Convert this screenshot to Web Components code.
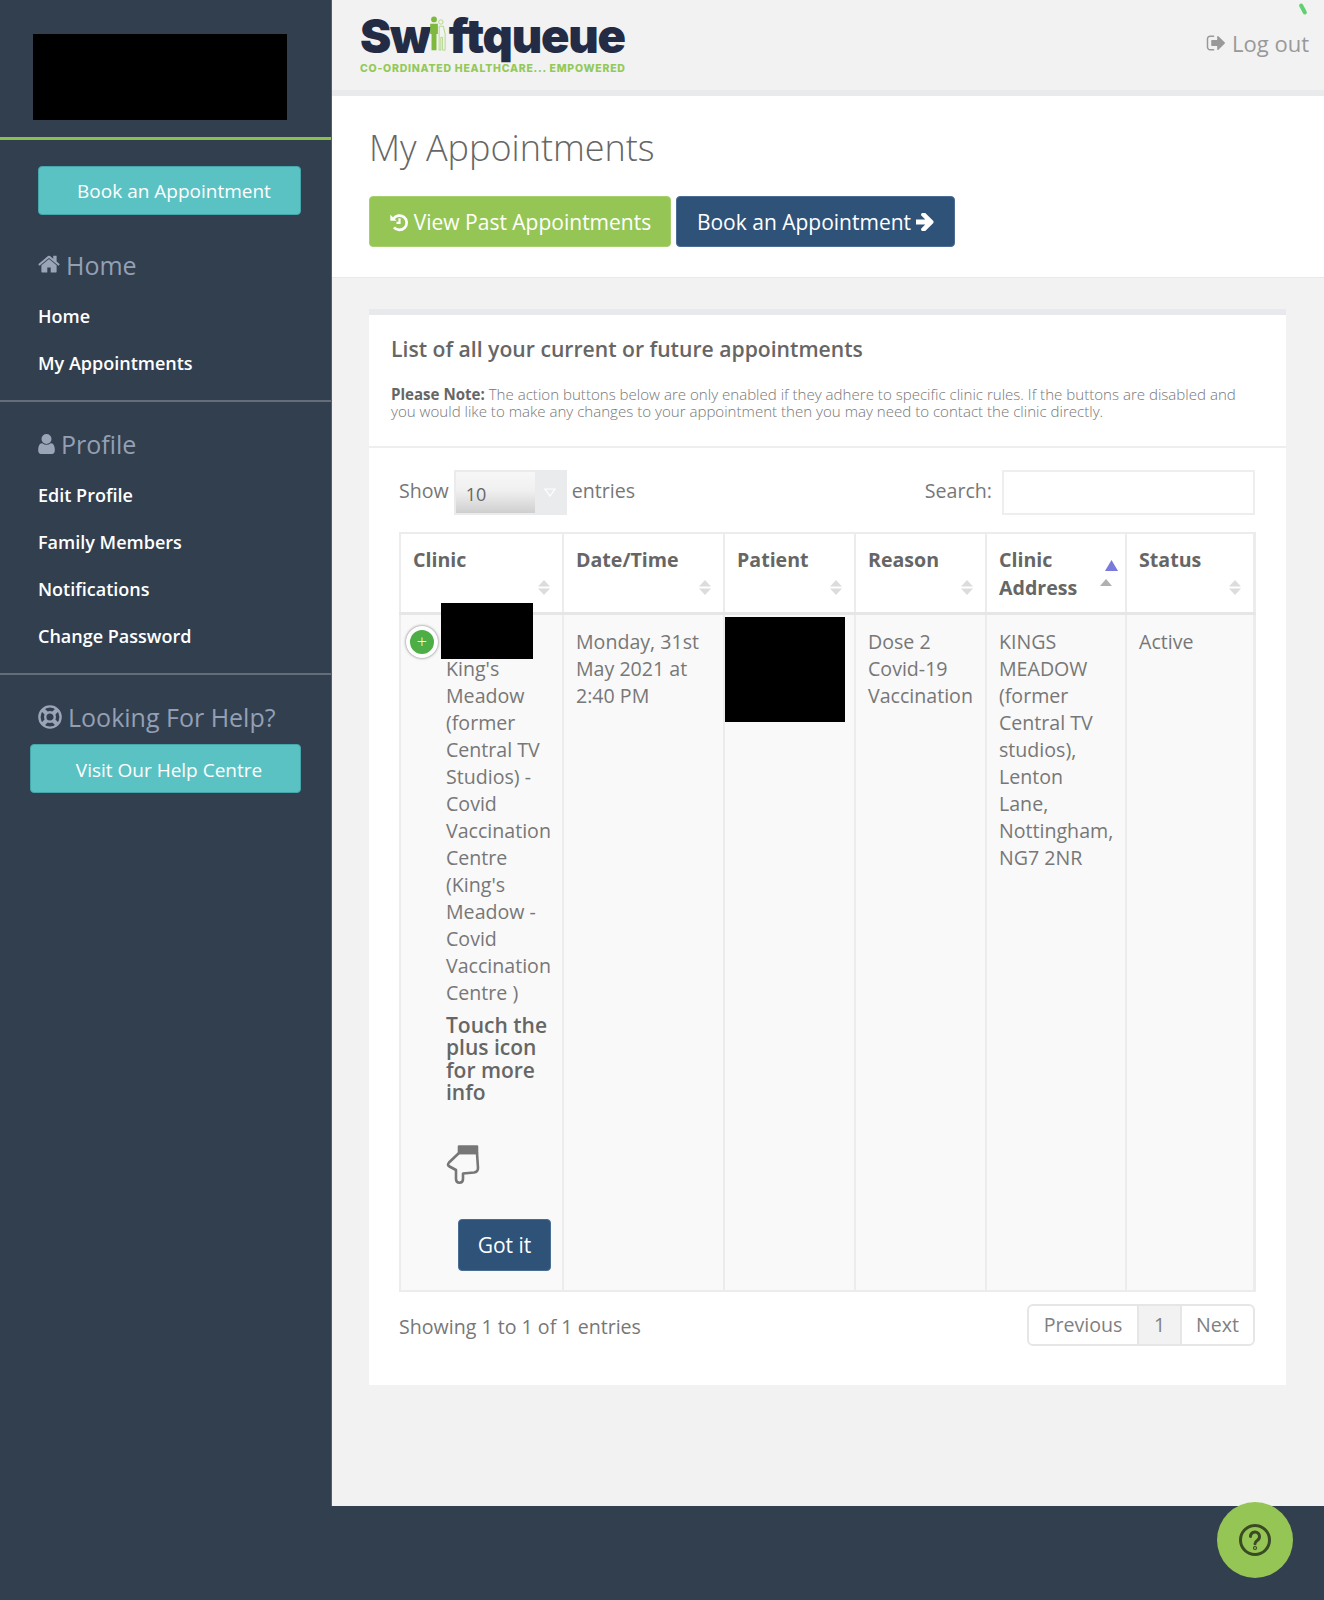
<!DOCTYPE html>
<html lang="en">
<head>
<meta charset="utf-8">
<title>My Appointments</title>
<style>
  html, body { margin: 0; padding: 0; background: #323f4f; }
  body { font-family: "Open Sans", "Liberation Sans", sans-serif; color: #666; }
  .page { display: block; position: relative; width: 1324px; height: 1600px; overflow: hidden; }
</style>
</head>
<body>
<sq-page class="page"></sq-page>

<script>
const ICONS = {
  home: '<svg viewBox="0 0 1664 1408" fill="currentColor"><path transform="translate(0,-256)" d="M1408 992v480q0 26-19 45t-45 19h-384v-384h-256v384h-384q-26 0-45-19t-19-45v-480q0-1 .5-3t.5-3l575-474 575 474q1 2 1 6zm223-69l-62 74q-8 9-21 11h-3q-13 0-21-7l-692-577-692 577q-12 8-24 7-13-2-21-11l-62-74q-8-10-7-23.5t11-21.5l719-599q32-26 76-26t76 26l244 204v-195q0-14 9-23t23-9h192q14 0 23 9t9 23v408l219 182q10 8 11 21.5t-7 23.5z"/></svg>',
  user: '<svg viewBox="256 128 1280 1536" fill="currentColor"><path d="M1536 1399q0 109-62.5 187t-150.5 78h-854q-88 0-150.5-78t-62.5-187q0-85 8.5-160.5t31.5-152 58.5-131 94-89 134.5-34.5q131 128 313 128t313-128q76 0 134.5 34.5t94 89 58.5 131 31.5 152 8.5 160.5zm-256-887q0 159-112.5 271.5t-271.5 112.5-271.5-112.5-112.5-271.5 112.5-271.5 271.5-112.5 271.5 112.5 112.5 271.5z"/></svg>',
  help: '<svg viewBox="0 0 24 24" fill="none" stroke="currentColor"><circle cx="12" cy="12" r="10.600" stroke-width="2.400"/><circle cx="12" cy="12" r="4.800" stroke-width="2.400"/><path d="M4.600 4.600L8.600 8.600M19.400 4.600L15.400 8.600M4.600 19.400L8.600 15.400M19.400 19.400L15.400 15.400" stroke-width="4.200"/></svg>',
  history: '<svg viewBox="0 0 24 24" fill="none" stroke="currentColor"><path d="M5.4 8.2A8.6 8.6 0 1 1 6 18.4" stroke-width="3.2"/><path d="M1.6 3.2L9.2 10.4H1.6z" fill="currentColor" stroke="none"/><path d="M12.6 7.6V13H9" stroke-width="2.6"/></svg>',
  arrow: '<svg viewBox="256 256 1344 1408" fill="currentColor"><path d="M1600 960q0 54-37 91l-651 651q-39 37-91 37-51 0-90-37l-75-75q-38-38-38-91t38-91l293-293h-704q-52 0-84.5-37.5t-32.5-90.5v-128q0-53 32.5-90.5t84.5-37.5h704l-293-294q-38-36-38-90t38-90l75-75q38-38 90-38 53 0 91 38l651 651q37 35 37 90z"/></svg>',
  logout: '<svg viewBox="0 256 1632 1280" fill="currentColor"><path d="M704 1440q0 4 1 20t.5 26.5-3 23.5-10 19.5-20.5 6.5h-320q-119 0-203.5-84.5t-84.5-203.5v-704q0-119 84.5-203.5t203.5-84.5h320q13 0 22.5 9.5t9.5 22.5q0 4 1 20t.5 26.5-3 23.5-10 19.5-20.5 6.5h-320q-66 0-113 47t-47 113v704q0 66 47 113t113 47h312l11.5 1 11.5 3 8 5.5 7 9 2 13.5zm928-544q0 26-19 45l-544 544q-19 19-45 19t-45-19-19-45v-288h-448q-26 0-45-19t-19-45v-384q0-26 19-45t45-19h448v-288q0-26 19-45t45-19 45 19l544 544q19 19 19 45z"/></svg>'
};

// small flat button, colour comes from the variant attribute
class SqButton extends HTMLElement {
  constructor() {
    super();
    this.attachShadow({ mode: 'open' });
    this.shadowRoot.innerHTML = `
      <style>
        :host {
          display: inline-flex;
          align-items: center;
          justify-content: center;
          box-sizing: border-box;
          gap: 5px;
          border-radius: 4px;
          border: 1px solid #45a6ab;
          background: #5bc2c4;
          color: #fff;
          font-family: "Open Sans", sans-serif;
          white-space: nowrap;
        }
        :host([variant="green"]) { background: #95c655; border-color: #a6d06d; }
        :host([variant="navy"]) { background: #2f5279; border-color: #4a6d94; }
      </style>
      <slot></slot>
    `;
  }
}
customElements.define('sq-button', SqButton);

class SqNavSection extends HTMLElement {
  constructor() {
    super();
    this.attachShadow({ mode: 'open' });
    this.shadowRoot.innerHTML = `
      <style>
        :host {
          display: block;
          box-sizing: border-box;
          padding: 22px 0 14px;
          border-bottom: 2px solid #646d79;
        }
        :host([last]) { border-bottom: 0; padding-bottom: 0; }
        .head {
          display: flex;
          align-items: center;
          gap: 6px;
          height: 40px;
          margin: 0 0 7px 38px;
          font-size: 25px;
          font-weight: 500;
          color: #949fb3;
        }
        .icon { display: flex; color: #9aa5b7; }
        .icon svg { display: block; height: var(--icon-h, 20px); width: var(--icon-w, 22px); }
      </style>
      <div class="head"><span class="icon"></span><span class="title"></span></div>
      <slot></slot>
    `;
    this.shadowRoot.querySelector('.title').textContent = this.getAttribute('title-text') || '';
    this.shadowRoot.querySelector('.icon').innerHTML = ICONS[this.getAttribute('icon')] || '';
  }
}
customElements.define('sq-nav-section', SqNavSection);

class SqNavLink extends HTMLElement {
  constructor() {
    super();
    this.attachShadow({ mode: 'open' });
    this.shadowRoot.innerHTML = `
      <style>
        :host {
          display: flex;
          align-items: center;
          height: 47px;
          padding-left: 38px;
          font-size: 18px;
          font-weight: 600;
          color: #fff;
        }
      </style>
      <slot></slot>
    `;
  }
}
customElements.define('sq-nav-link', SqNavLink);

class SqSidebar extends HTMLElement {
  constructor() {
    super();
    this.attachShadow({ mode: 'open' });
    this.shadowRoot.innerHTML = `
      <style>
        :host {
          display: block;
          width: 331px;
          flex: 0 0 331px;
          background: #323f4f;
        }
        .brand {
          box-sizing: border-box;
          height: 140px;
          padding: 34px 0 0 33px;
          border-bottom: 3px solid #8cc04d;
        }
        .brand div { width: 254px; height: 86px; background: #000; }
        .book { padding: 26px 30px 8px 38px; }
        .book sq-button, .visit {
          display: flex;
          height: 49px;
          font-size: 19px;
          font-weight: 400;
          padding-left: 9px;
        }
        .visit { margin: 1px 30px 0 30px; padding: 2px 0 0 7px; }
        sq-nav-section[icon="user"] { --icon-w: 17px; --icon-h: 20px; }
        sq-nav-section[icon="help"] { --icon-w: 24px; --icon-h: 24px; }
      </style>
      <div class="brand"><div></div></div>
      <div class="book"><sq-button>Book an Appointment</sq-button></div>
      <sq-nav-section icon="home" title-text="Home">
        <sq-nav-link>Home</sq-nav-link>
        <sq-nav-link>My Appointments</sq-nav-link>
      </sq-nav-section>
      <sq-nav-section icon="user" title-text="Profile">
        <sq-nav-link>Edit Profile</sq-nav-link>
        <sq-nav-link>Family Members</sq-nav-link>
        <sq-nav-link>Notifications</sq-nav-link>
        <sq-nav-link>Change Password</sq-nav-link>
      </sq-nav-section>
      <sq-nav-section icon="help" title-text="Looking For Help?" last>
        <sq-button class="visit">Visit Our Help Centre</sq-button>
      </sq-nav-section>
    `;
  }
}
customElements.define('sq-sidebar', SqSidebar);

class SqTopbar extends HTMLElement {
  constructor() {
    super();
    this.attachShadow({ mode: 'open' });
    this.shadowRoot.innerHTML = `
      <style>
        :host {
          display: flex;
          justify-content: space-between;
          align-items: flex-start;
          position: relative;
          box-sizing: border-box;
          height: 96px;
          padding: 10px 15px 0 28px;
          background: #f2f2f2;
          border-bottom: 6px solid #e9eaeb;
        }
        .logo { display: flex; flex-direction: column; position: relative; }
        .word {
          font-family: Inter, "Liberation Sans", sans-serif;
          font-weight: 900;
          font-size: 47px;
          line-height: 51px;
          letter-spacing: -1.2px;
          color: #232b45;
        }
        /* the i stays as text, the little figures are drawn over it */
        .word i { font-style: normal; color: #f2f2f2; letter-spacing: 4.800px; }
        .logo svg { position: absolute; left: 67px; top: 6px; width: 20px; height: 35px; }
        .tag {
          margin-top: 2px;
          font-family: Inter, "Liberation Sans", sans-serif;
          font-weight: 800;
          font-size: 10.500px;
          line-height: 12px;
          letter-spacing: .75px;
          color: #93c958;
          white-space: nowrap;
        }
        .out {
          display: flex;
          align-items: center;
          gap: 7px;
          margin-top: 17px;
          font-size: 22px;
          line-height: 32px;
          color: #999;
        }
        .out svg { display: block; width: 19px; height: 16px; }
        .spin {
          position: absolute;
          right: 19px;
          top: 3px;
          width: 4px;
          height: 12px;
          border-radius: 2px;
          background: #5fd16f;
          transform: rotate(-28deg);
        }
      </style>
      <div class="logo">
        <span class="word">Sw<i>i</i>ftqueue</span>
        <svg viewBox="0 0 23 41">
          <circle cx="8" cy="4" r="3.400" fill="#7fb83f"/>
          <path d="M3.500 9h9v12h-1.600v19H5.100V21H3.500z" fill="#7fb83f"/>
          <circle cx="16" cy="7" r="2.600" fill="none" stroke="#a9d47a" stroke-width="1"/>
          <path d="M14 12h5l2 9v19h-3V25h-2v15h-2z" fill="none" stroke="#a9d47a" stroke-width="1"/>
        </svg>
        <span class="tag">CO-ORDINATED HEALTHCARE... EMPOWERED</span>
      </div>
      <div class="out">${ICONS.logout}<span>Log out</span></div>
      <div class="spin"></div>
    `;
  }
}
customElements.define('sq-topbar', SqTopbar);

class SqPageTitle extends HTMLElement {
  constructor() {
    super();
    this.attachShadow({ mode: 'open' });
    this.shadowRoot.innerHTML = `
      <style>
        :host {
          display: block;
          box-sizing: border-box;
          height: 182px;
          padding: 26px 37px 0;
          background: #fff;
          border-bottom: 1px solid #e9e9e9;
        }
        h1 {
          margin: 0 0 23px;
          font-size: 36px;
          line-height: 51px;
          font-weight: 300;
          color: #666;
        }
        .btns { display: flex; gap: 5px; }
        sq-button { height: 51px; font-size: 21px; }
        sq-button svg { display: block; }
        .past { width: 302px; }
        .past svg { width: 20px; height: 20px; }
        .new { width: 279px; }
        .new svg { width: 18px; height: 18px; }
      </style>
      <h1>My Appointments</h1>
      <div class="btns">
        <sq-button class="past" variant="green">${ICONS.history}<span>View Past Appointments</span></sq-button>
        <sq-button class="new" variant="navy"><span>Book an Appointment</span>${ICONS.arrow}</sq-button>
      </div>
    `;
  }
}
customElements.define('sq-page-title', SqPageTitle);

class SqSelect extends HTMLElement {
  constructor() {
    super();
    this.attachShadow({ mode: 'open' });
    this.shadowRoot.innerHTML = `
      <style>
        :host {
          display: inline-flex;
          box-sizing: border-box;
          width: 113px;
          height: 45px;
          border: 2px solid #e9ebed;
          background: #e9ebed;
          font-size: 18px;
          color: #666;
        }
        .val {
          flex: 1;
          padding: 7px 0 0 10px;
          line-height: 30px;
          background: linear-gradient(#f7f7f7, #f0f0f0 45%, #cfcfcf);
        }
        .caret { width: 30px; display: flex; align-items: center; justify-content: center; }
        svg { width: 12px; height: 9px; }
      </style>
      <div class="val"><slot></slot></div>
      <div class="caret"><svg viewBox="0 0 12 9"><path d="M1 1h10L6 8z" fill="none" stroke="#fff" stroke-width="1.2"/></svg></div>
    `;
  }
}
customElements.define('sq-select', SqSelect);

class SqSortArrows extends HTMLElement {
  constructor() {
    super();
    this.attachShadow({ mode: 'open' });
    this.shadowRoot.innerHTML = `
      <style>
        :host {
          position: absolute;
          right: 12px;
          bottom: 17px;
          display: block;
          width: 12px;
          height: 15px;
        }
        :host([sorted]) { right: 7px; bottom: 26px; width: 18px; height: 26px; }
        svg { display: block; width: 100%; height: 100%; }
      </style>
      ${this.hasAttribute('sorted')
        ? '<svg viewBox="0 0 18 26"><path d="M5 11L11.500 0 18 11z" fill="#7a79dc"/><path d="M0 26L6 19 12 26z" fill="#b0b0b0"/></svg>'
        : '<svg viewBox="0 0 12 15"><path d="M0 6.500L6 0l6 6.500zM0 8.500h12L6 15z" fill="#dcdcdc"/></svg>'}
    `;
  }
}
customElements.define('sq-sort-arrows', SqSortArrows);

class SqAppointmentsTable extends HTMLElement {
  constructor() {
    super();
    this.attachShadow({ mode: 'open' });
    const heads = [
      ['Clinic', 163], ['Date/Time', 161], ['Patient', 131],
      ['Reason', 131], ['Clinic Address', 140], ['Status', 128]
    ];
    this.shadowRoot.innerHTML = `
      <style>
        :host { display: block; font-size: 19.600px; color: #777; }
        table {
          table-layout: fixed;
          width: 854px;
          border-collapse: collapse;
          border: 2px solid #ececec;
          border-right-width: 3px;
        }
        th, td { border-left: 2px solid #ececec; border-right: 2px solid #ececec; vertical-align: top; text-align: left; }
        th {
          position: relative;
          box-sizing: border-box;
          height: 80px;
          padding: 12px 36px 0 12px;
          font-size: 19.600px;
          line-height: 28px;
          font-weight: 700;
          color: #666;
          border-bottom: 3px solid #e6e6e6;
          background: #fff;
        }
        th.st { padding-right: 11px; }
        td {
          height: 662px;
          padding: 13px 11px 0 12px;
          line-height: 27px;
          background: #f9f9f9;
          font-weight: 400;
        }
        td.clinic { position: relative; padding: 13px 10px 0 45px; }
        .tip {
          margin-top: 8px;
          font-size: 21px;
          line-height: 22.500px;
          font-weight: 600;
          color: #666;
        }
        .hand { display: block; width: 34px; height: 40px; margin-top: 40px; }
        .got {
          display: flex;
          width: 93px;
          height: 52px;
          margin: 35px 0 0 12px;
          padding-top: 2px;
          font-size: 21px;
          border-radius: 4px;
        }
        .plus {
          position: absolute;
          left: 5px;
          top: 11px;
          box-sizing: border-box;
          width: 32px;
          height: 32px;
          border-radius: 50%;
          background: #4cae45;
          border: 4px solid #fff;
          box-shadow: 0 0 3px rgba(0,0,0,.55);
          color: #fff;
          font-size: 18px;
          font-weight: 300;
          line-height: 22px;
          text-align: center;
        }
        .mask { position: absolute; background: #000; }
        .mask.a { left: 40px; top: -12px; width: 92px; height: 56px; }
        .mask.b { left: 0; top: 2px; width: 120px; height: 105px; }
        td.patient { position: relative; }
      </style>
      <table>
        <colgroup>${heads.map(h => `<col style="width:${h[1]}px">`).join('')}</colgroup>
        <thead><tr>
          ${heads.map((h, i) => `<th class="${i === 5 ? 'st' : ''}">${h[0]}<sq-sort-arrows ${i === 4 ? 'sorted' : ''}></sq-sort-arrows></th>`).join('')}
        </tr></thead>
        <tbody><tr>
          <td class="clinic">
            <div>&nbsp;<br>King's Meadow (former Central TV Studios) - Covid Vaccination Centre (King's Meadow - Covid Vaccination Centre )</div>
            <div class="tip">Touch the plus icon for more info</div>
            <svg class="hand" viewBox="0 0 34 40" fill="none" stroke="#777" stroke-width="2.600" stroke-linejoin="round">
              <path d="M13 9L3 18.500Q0.800 21 3.500 22.500L10 26V35Q10 38.700 13.500 38.700T17 35V29.500L28 28.500Q32 28 32 24L31 9Z" fill="#f9f9f9"/>
              <path d="M13 2.500h18V9H13z" fill="#777"/>
            </svg>
            <sq-button class="got" variant="navy">Got it</sq-button>
            <div class="plus">+</div>
            <div class="mask a"></div>
          </td>
          <td>Monday, 31st May 2021 at 2:40 PM</td>
          <td class="patient"><div class="mask b"></div></td>
          <td>Dose 2 Covid-19 Vaccination</td>
          <td>KINGS MEADOW (former Central TV studios), Lenton Lane, Nottingham, NG7 2NR</td>
          <td>Active</td>
        </tr></tbody>
      </table>
    `;
  }
}
customElements.define('sq-appointments-table', SqAppointmentsTable);

class SqPager extends HTMLElement {
  constructor() {
    super();
    this.attachShadow({ mode: 'open' });
    this.shadowRoot.innerHTML = `
      <style>
        :host {
          display: inline-flex;
          box-sizing: border-box;
          height: 42px;
          border: 2px solid #e6e6e6;
          border-radius: 6px;
          font-size: 19.600px;
          color: #808080;
          background: #fff;
        }
        span { display: flex; align-items: center; justify-content: center; }
        .on { width: 41px; background: #f2f2f2; border-left: 2px solid #e6e6e6; border-right: 2px solid #e6e6e6; }
        .p { width: 108px; }
        .n { width: 71px; }
      </style>
      <span class="p">Previous</span><span class="on">1</span><span class="n">Next</span>
    `;
  }
}
customElements.define('sq-pager', SqPager);

class SqCard extends HTMLElement {
  constructor() {
    super();
    this.attachShadow({ mode: 'open' });
    this.shadowRoot.innerHTML = `
      <style>
        :host {
          display: block;
          box-sizing: border-box;
          margin: 31px 38px 0 37px;
          height: 1076px;
          background: #fff;
          border-top: 6px solid #e8e9ec;
        }
        .intro { height: 133px; box-sizing: border-box; padding: 18px 22px 0; border-bottom: 2px solid #eeeeee; }
        h2 { margin: 0 0 21px; font-size: 21.150px; line-height: 32px; font-weight: 600; color: #666; }
        p { margin: 0; font-size: 15.080px; line-height: 16.500px; font-weight: 300; color: #777; }
        b { font-weight: 700; color: #666; }
        .body { padding: 22px 31px 0 30px; }
        .tools { display: flex; justify-content: space-between; height: 45px; margin-bottom: 17px; font-size: 19.600px; color: #777; }
        .side { display: flex; gap: 5px; height: 45px; line-height: 42px; }
        .search { gap: 10px; }
        .input { width: 253px; height: 45px; box-sizing: border-box; border: 2px solid #eee; }
        .foot { display: flex; justify-content: space-between; margin-top: 12px; font-size: 19.600px; color: #777; }
        .foot span { line-height: 46px; }
      </style>
      <div class="intro">
        <h2>List of all your current or future appointments</h2>
        <p><b>Please Note:</b> <span>The action buttons below are only enabled if they adhere to specific clinic rules. If the buttons are disabled and</span><br><span>you would like to make any changes to your appointment then you may need to contact the clinic directly.</span></p>
      </div>
      <div class="body">
        <div class="tools">
          <div class="side"><span>Show</span><sq-select>10</sq-select><span>entries</span></div>
          <div class="side search"><span>Search:</span><div class="input"></div></div>
        </div>
        <sq-appointments-table></sq-appointments-table>
        <div class="foot"><span>Showing 1 to 1 of 1 entries</span><sq-pager></sq-pager></div>
      </div>
    `;
  }
}
customElements.define('sq-card', SqCard);

class SqPage extends HTMLElement {
  constructor() {
    super();
    this.attachShadow({ mode: 'open' });
    this.shadowRoot.innerHTML = `
      <style>
        :host { display: block; font-family: "Open Sans", "Liberation Sans", sans-serif; }
        .wrap { display: flex; height: 1506px; }
        main { flex: 1; min-width: 0; background: #f2f2f2; border-left: 1px solid #54606e; }
        .help {
          position: absolute;
          left: 1217px;
          top: 1502px;
          width: 76px;
          height: 76px;
          border-radius: 50%;
          background: #95c655;
          display: flex;
          align-items: center;
          justify-content: center;
        }
        .help svg { width: 34px; height: 34px; }
      </style>
      <div class="wrap">
        <sq-sidebar></sq-sidebar>
        <main>
          <sq-topbar></sq-topbar>
          <sq-page-title></sq-page-title>
          <sq-card></sq-card>
        </main>
      </div>
      <div class="help">
        <svg viewBox="0 0 34 34" fill="none" stroke="#3a4a25" stroke-width="3" stroke-linecap="round">
          <circle cx="17" cy="17" r="14.500"/>
          <path d="M12.500 13.500a4.500 4.500 0 1 1 7 3.700c-1.700 1.100-2.500 2-2.500 3.600"/>
          <circle cx="17" cy="25" r=".6"/>
        </svg>
      </div>
    `;
  }
}
customElements.define('sq-page', SqPage);
</script>
</body>
</html>
